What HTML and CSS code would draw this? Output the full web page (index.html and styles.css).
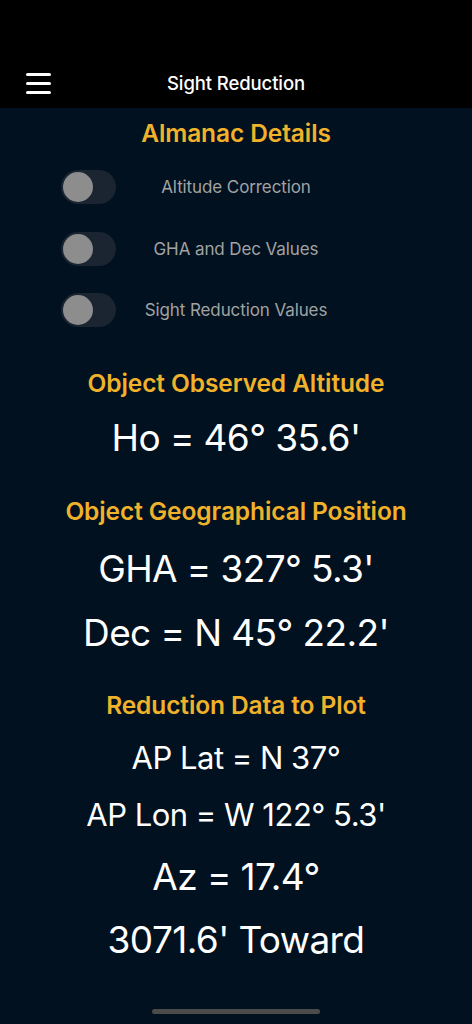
FILE: index.html
```html
<!DOCTYPE html>
<html lang="en">
<head>
<meta charset="utf-8">
<title>Sight Reduction</title>
<link rel="stylesheet" href="styles.css">
</head>
<body>
<header class="topbar">
  <div class="topbar-inner">
    <button class="menu-btn" aria-label="Menu">
      <svg width="26" height="22" viewBox="0 0 26 22">
        <rect x="0" y="1" width="25" height="3" rx="1.5" fill="#fff"/>
        <rect x="0" y="10" width="25" height="3" rx="1.5" fill="#fff"/>
        <rect x="0" y="19" width="25" height="3" rx="1.5" fill="#fff"/>
      </svg>
    </button>
    <div class="title">Sight Reduction</div>
    <div class="spacer"></div>
  </div>
</header>

<main class="content">
  <div class="scroll">
    <h2 class="heading peek">Sight Reduction Inputs</h2>
    <h2 class="heading almanac">Almanac Details</h2>

    <div class="toggles">
      <div class="toggle-row">
        <span class="switch"><span class="knob"></span></span>
        <span class="toggle-label">Altitude Correction</span>
        <span></span>
      </div>
      <div class="toggle-row">
        <span class="switch"><span class="knob"></span></span>
        <span class="toggle-label">GHA and Dec Values</span>
        <span></span>
      </div>
      <div class="toggle-row">
        <span class="switch"><span class="knob"></span></span>
        <span class="toggle-label">Sight Reduction Values</span>
        <span></span>
      </div>
    </div>

    <h2 class="heading sec-alt">Object Observed Altitude</h2>
    <p class="value big v-ho">Ho = 46° 35.6'</p>

    <h2 class="heading sec-gp">Object Geographical Position</h2>
    <p class="value big v-gha">GHA = 327° 5.3'</p>
    <p class="value big v-dec">Dec = N 45° 22.2'</p>

    <h2 class="heading sec-red">Reduction Data to Plot</h2>
    <p class="value mid v-lat">AP Lat = N 37°</p>
    <p class="value mid v-lon">AP Lon = W 122° 5.3'</p>
    <p class="value big v-az">Az = 17.4°</p>
    <p class="value big v-tow">3071.6' Toward</p>
  </div>
</main>

<div class="home-indicator"></div>
</body>
</html>
```

FILE: styles.css
```css
* { box-sizing: border-box; }

html, body {
  margin: 0;
  padding: 0;
  background: #01111f;
  font-family: Inter, "Noto Sans", "Liberation Sans", sans-serif;
  color: #fff;
}

body {
  height: 1024px;
  overflow: hidden;
}

.topbar {
  height: 108px;
  background: #000;
  display: flex;
  align-items: flex-end;
}

.topbar-inner {
  width: 100%;
  height: 50px;
  display: grid;
  grid-template-columns: 1fr auto 1fr;
  align-items: center;
}

.menu-btn {
  justify-self: start;
  margin-left: 26px;
  padding: 0;
  background: none;
  border: 0;
  display: flex;
  height: 22px;
}

.title {
  font-size: 18.5px;
  font-weight: 500;
  letter-spacing: -0.1px;
  color: #fff;
  line-height: 24px;
}

.content {
  height: 916px;
  overflow: hidden;
}

.scroll {
  display: flex;
  flex-direction: column;
  align-items: stretch;
}

.heading {
  margin: 0;
  text-align: center;
  color: #f0b22b;
  font-size: 24.5px;
  font-weight: 600;
  line-height: 30px;
  letter-spacing: -0.1px;
}

.peek { margin-top: -31px; }
.almanac { margin-top: 11px; }

.toggles {
  margin-top: 22px;
  display: flex;
  flex-direction: column;
  gap: 27.5px;
}

.toggle-row {
  display: grid;
  grid-template-columns: 1fr auto 1fr;
  align-items: center;
  height: 34px;
}

.switch {
  justify-self: start;
  margin-left: 61px;
  width: 55px;
  height: 34px;
  border-radius: 17px;
  background: #1b2431;
  display: flex;
  align-items: center;
  padding-left: 2px;
}

.knob {
  width: 30px;
  height: 30px;
  border-radius: 50%;
  background: #8d8d8d;
}

.toggle-label {
  font-size: 17px;
  color: #a2a2a2;
  line-height: 20px;
  letter-spacing: -0.1px;
}

.value {
  margin: 0;
  text-align: center;
  color: #fff;
  font-weight: 400;
}

.big {
  font-size: 37px;
  line-height: 44px;
  letter-spacing: -0.6px;
}

.mid {
  font-size: 31px;
  line-height: 40px;
  letter-spacing: -0.5px;
}

.sec-alt { margin-top: 41px; }
.v-ho { margin-top: 18px; }
.sec-gp { margin-top: 36px; }
.v-gha { margin-top: 21px; }
.v-dec { margin-top: 20px; }
.sec-red { margin-top: 35px; }
.v-lat { margin-top: 18px; }
.v-lon { margin-top: 17px; }
.v-az { margin-top: 20px; }
.v-tow { margin-top: 19px; }

.home-indicator {
  position: fixed;
  left: 152px;
  top: 1009px;
  width: 168px;
  height: 5px;
  border-radius: 3px;
  background: #4b4b4b;
}
```
